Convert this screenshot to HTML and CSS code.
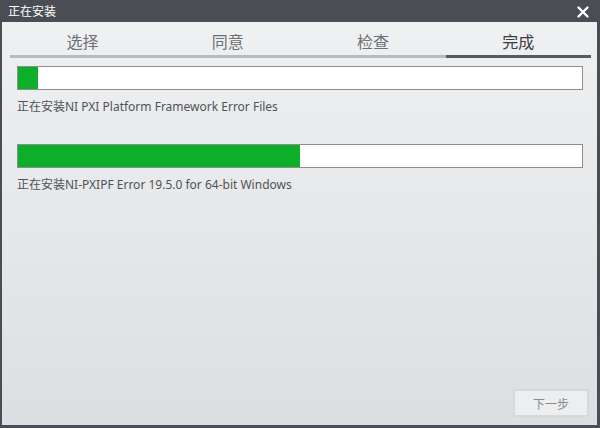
FILE: index.html
```html
<!DOCTYPE html>
<html lang="zh-CN">
<head>
<meta charset="utf-8">
<title>正在安装</title>
<link rel="stylesheet" href="styles.css">
</head>
<body>
<div class="window">
  <div class="titlebar">
    <span class="title">正在安装</span>
    <svg class="close" width="12" height="12" viewBox="0 0 12 12"><path d="M1.5 1.5 L10.5 10.5 M10.5 1.5 L1.5 10.5" stroke="#fff" stroke-width="2.4" stroke-linecap="round"/></svg>
  </div>
  <div class="content">
    <div class="tabs">
      <div class="tab">选择</div>
      <div class="tab">同意</div>
      <div class="tab">检查</div>
      <div class="tab active">完成</div>
    </div>
    <div class="progress first"><div class="fill" style="width:20px"></div></div>
    <div class="status">正在安装NI PXI Platform Framework Error Files</div>
    <div class="progress second"><div class="fill" style="width:282px"></div></div>
    <div class="status">正在安装NI-PXIPF Error 19.5.0 for 64-bit Windows</div>
    <div class="spacer"></div>
    <div class="footer">
      <button class="next" disabled>下一步</button>
    </div>
  </div>
</div>
</body>
</html>
```
FILE: styles.css
```css
html, body {
  margin: 0;
  padding: 0;
}
body {
  width: 600px;
  height: 428px;
  overflow: hidden;
  font-family: "Noto Sans", "Noto Sans CJK SC", sans-serif;
}
.window {
  width: 600px;
  height: 428px;
  box-sizing: border-box;
  background: #4a4e54;
  padding: 0 3px 3px 2px;
  display: flex;
  flex-direction: column;
}
.titlebar {
  height: 22px;
  flex: none;
  display: flex;
  align-items: center;
  justify-content: space-between;
  padding: 0 8px 0 6px;
  color: #ffffff;
  font-family: "Noto Sans CJK SC", sans-serif;
  font-size: 12px;
}
.title {
  line-height: 22px;
}
.close {
  display: block;
  margin-top: 1px;
}
.content {
  flex: 1;
  background: linear-gradient(#eff0f1, #dcdfe2);
  display: flex;
  flex-direction: column;
  padding: 0 8px 8px 15px;
}
.tabs {
  display: grid;
  grid-template-columns: repeat(4, 1fr);
  margin: 0 -2px 0 -7px;
}
.tab {
  padding: 8px 0 3px;
  line-height: 22px;
  text-align: center;
  font-family: "Noto Sans CJK SC", sans-serif;
  font-size: 16px;
  color: #6c6f73;
  border-bottom: 3px solid #b9bbbd;
}
.tab.active {
  color: #3b3e43;
  border-bottom-color: #575b60;
}
.progress {
  height: 22px;
  margin-right: 6px;
  border: 1px solid #8e8e8e;
  background: #ffffff;
  display: flex;
}
.progress.first {
  margin-top: 8px;
}
.progress.second {
  margin-top: 29px;
}
.fill {
  background: #0cae2a;
}
.status {
  margin-top: 9px;
  font-size: 12px;
  line-height: 16px;
  color: #505357;
  font-family: "Noto Sans", "Noto Sans CJK SC", sans-serif;
}
.spacer {
  flex: 1;
}
.footer {
  display: flex;
  justify-content: flex-end;
}
.next {
  width: 76px;
  height: 28px;
  box-sizing: border-box;
  border: 2px solid #d6d9dc;
  background: #eceef0;
  color: #8a8c8f;
  font-family: "Noto Sans CJK SC", sans-serif;
  font-size: 12px;
  padding: 0;
}
```
